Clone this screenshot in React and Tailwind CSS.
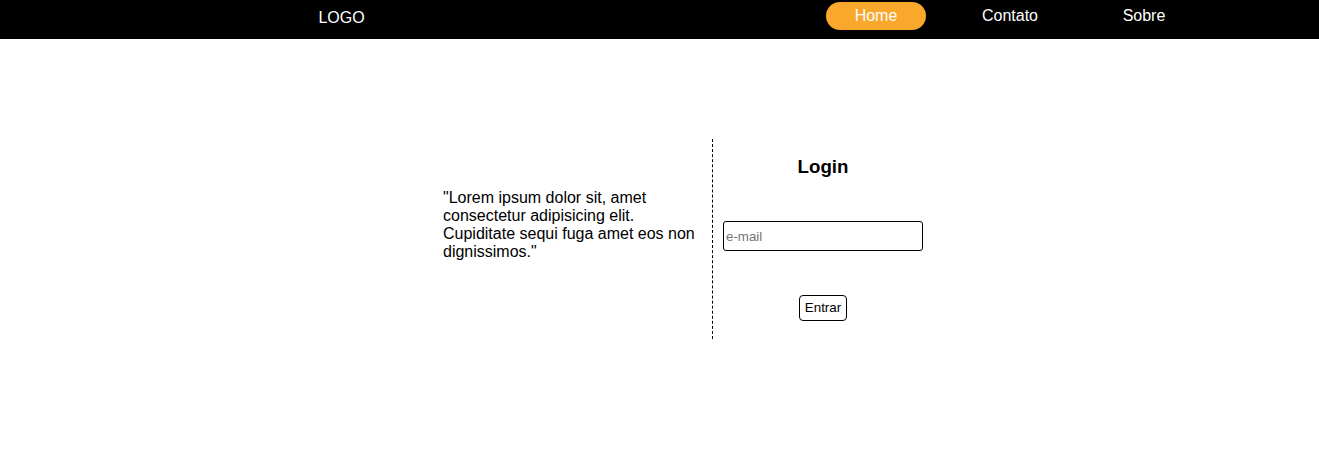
import React from 'react';

const links = ['Home', 'Contato', 'Sobre'];

export default function App() {
  return (
    <div className="min-h-[475px] bg-white font-['Liberation_Sans',Arial,sans-serif] text-black">
      {/* barra de navegação */}
      <nav className="h-[39px] bg-black flex items-start text-white">
        <div className="w-[683px] flex justify-center pt-[9px]">
          <span className="text-[16px] leading-[18px]">LOGO</span>
        </div>
        <ul className="flex gap-[34px] ml-[143px] mt-[2px]">
          {links.map((l, i) => (
            <li
              key={l}
              className={`w-[100px] h-[28px] flex items-center justify-center text-[16px] rounded-full ${i === 0 ? 'bg-[#f9a82b]' : ''}`}
            >
              {l}
            </li>
          ))}
        </ul>
      </nav>

      {/* conteúdo */}
      <main className="flex justify-center pt-[100px] pl-[57px]">
        <div className="flex h-[200px]">
          <div className="w-[270px] border-r border-dashed border-black pt-[50px] pr-[12px]">
            <p className="text-[16px] leading-[18px]">
              "Lorem ipsum dolor sit, amet consectetur adipisicing elit. Cupiditate sequi fuga amet eos non dignissimos."
            </p>
          </div>
          <div className="w-[220px] flex flex-col items-center pt-[17px]">
            <h3 className="text-[18.72px] font-bold leading-[22px]">Login</h3>
            <input
              type="text"
              placeholder="e-mail"
              className="mt-[43px] w-[200px] h-[30px] border border-black rounded-[3px] px-[2px] text-[13.33px] placeholder:text-[#757575] outline-none"
            />
            <button className="mt-[44px] w-[48px] h-[26px] border border-black rounded-[4px] bg-white text-[13.33px]">
              Entrar
            </button>
          </div>
        </div>
      </main>
    </div>
  );
}
